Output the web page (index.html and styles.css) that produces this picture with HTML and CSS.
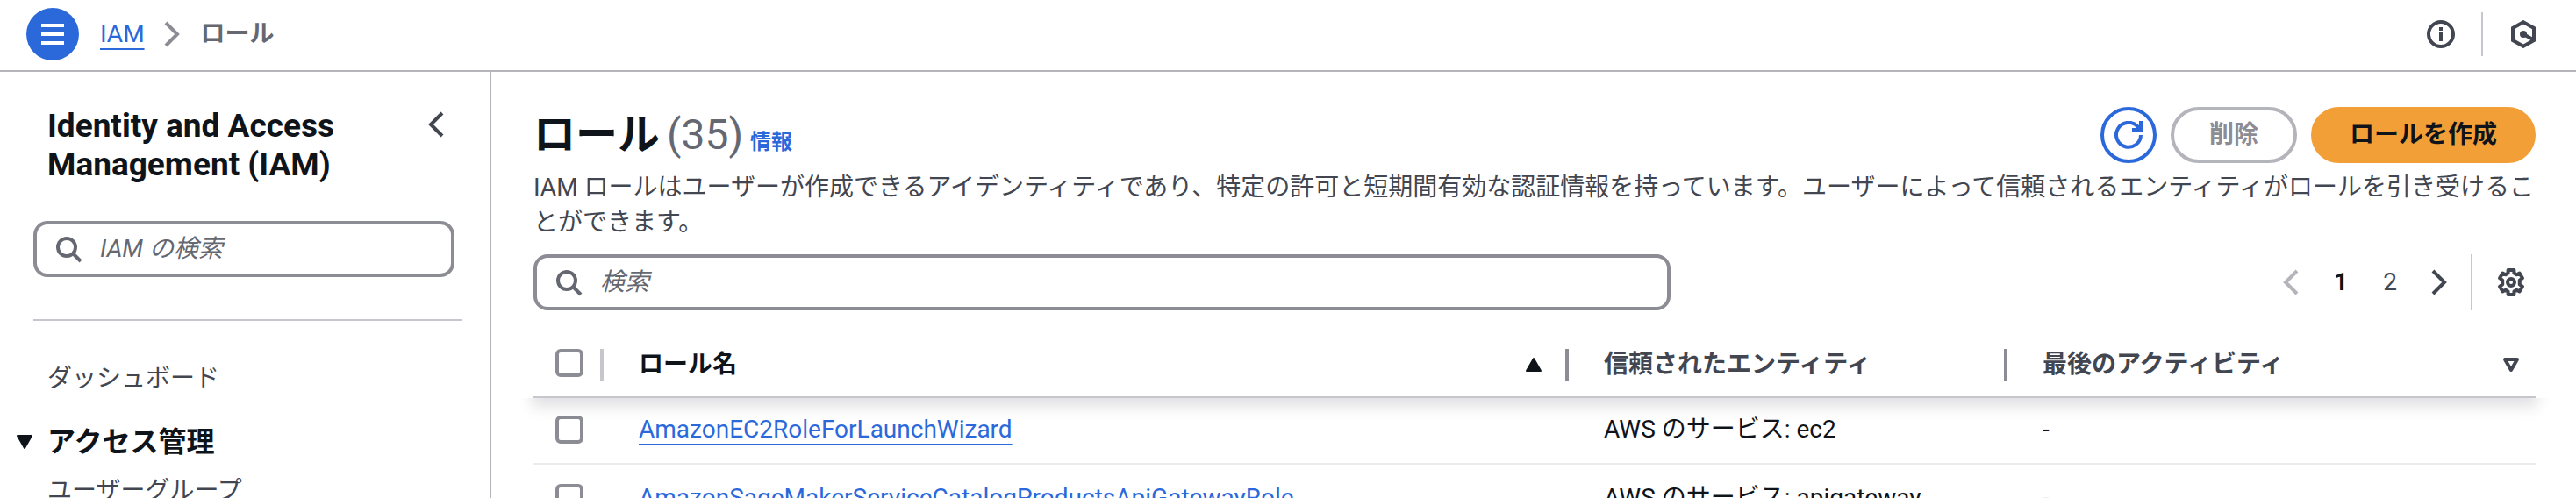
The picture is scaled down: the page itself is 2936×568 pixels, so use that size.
FILE: index.html
```html
<!DOCTYPE html>
<html lang="ja">
<head>
<meta charset="utf-8">
<meta name="viewport" content="width=device-width, initial-scale=1">
<title>ロール | IAM</title>
<link rel="stylesheet" href="styles.css">
</head>
<body>
<div class="app">
  <header class="topbar">
    <button class="menu-button" type="button" aria-label="メニュー">
      <svg class="icon" viewBox="0 0 16 16"><path d="M1.500 3h13M1.500 8h13M1.500 13h13"/></svg>
    </button>
    <nav class="breadcrumbs" aria-label="パンくずリスト">
      <a class="link" href="#iam">IAM</a>
      <svg class="icon crumb-arrow" viewBox="0 0 16 16"><path d="M4 1.500 10.500 8 4 14.500"/></svg>
      <span class="crumb-current">ロール</span>
    </nav>
    <div class="topbar-tools">
      <button class="icon-button" type="button" aria-label="ヘルプ">
        <svg class="icon" viewBox="0 0 16 16"><circle cx="8" cy="8" r="7"/><path d="M8 4v2M8 7v5"/></svg>
      </button>
      <span class="tool-divider"></span>
      <button class="icon-button" type="button" aria-label="Amazon Q">
        <svg class="icon" viewBox="0 0 16 16"><path d="M8 1.100 14 4.500v7L8 14.900 2 11.500v-7z"/><path d="M8 8l5.500 3"/><circle class="fill" cx="8" cy="8" r="2"/></svg>
      </button>
    </div>
  </header>

  <div class="layout">
    <aside class="sidebar">
      <div class="sidebar-head">
        <h2 class="sidebar-title">Identity and Access Management (IAM)</h2>
        <button class="icon-button" type="button" aria-label="ナビゲーションを閉じる">
          <svg class="icon" viewBox="0 0 16 16"><path d="M11 1.500 4.500 8l6.500 6.500"/></svg>
        </button>
      </div>
      <label class="search sidebar-search">
        <svg class="icon" viewBox="0 0 16 16"><circle cx="7" cy="7" r="5"/><path d="m10.500 10.500 4.500 4.500"/></svg>
        <input class="search-input" type="search" placeholder="IAM の検索" aria-label="IAM の検索">
      </label>
      <hr class="sidebar-rule">
      <nav class="side-nav" aria-label="IAM">
        <a class="side-link" href="#dashboard">ダッシュボード</a>
        <button class="side-section" type="button" aria-expanded="true">
          <svg class="caret" viewBox="0 0 20 18"><path d="M2 2h16l-8 14z"/></svg>
          <span>アクセス管理</span>
        </button>
        <a class="side-link" href="#groups">ユーザーグループ</a>
      </nav>
    </aside>

    <main class="content">
      <div class="page-head">
        <div class="page-title">
          <h1 class="title">ロール <span class="count">(35)</span></h1>
          <a class="info-link" href="#info">情報</a>
        </div>
        <div class="actions">
          <button class="button refresh" type="button" aria-label="更新">
            <svg class="icon" viewBox="0 0 16 16"><path d="M15 8a7 7 0 1 1-2-5l2 2"/><path d="M15 0v5h-5"/></svg>
          </button>
          <button class="button" type="button" disabled>削除</button>
          <button class="button primary" type="button">ロールを作成</button>
        </div>
      </div>
      <p class="description">IAM ロールはユーザーが作成できるアイデンティティであり、特定の許可と短期間有効な認証情報を持っています。ユーザーによって信頼されるエンティティがロールを引き受けることができます。</p>

      <div class="table-tools">
        <label class="search table-search">
          <svg class="icon" viewBox="0 0 16 16"><circle cx="7" cy="7" r="5"/><path d="m10.500 10.500 4.500 4.500"/></svg>
          <input class="search-input" type="search" placeholder="検索" aria-label="検索">
        </label>
        <div class="pager">
          <button class="icon-button" type="button" aria-label="前のページ" disabled>
            <svg class="icon" viewBox="0 0 16 16"><path d="M11 1.500 4.500 8l6.500 6.500"/></svg>
          </button>
          <button class="page-button current" type="button" aria-current="page">1</button>
          <button class="page-button" type="button">2</button>
          <button class="icon-button" type="button" aria-label="次のページ">
            <svg class="icon" viewBox="0 0 16 16"><path d="M4.500 1.500 11 8l-6.500 6.500"/></svg>
          </button>
        </div>
        <div class="settings">
          <button class="icon-button" type="button" aria-label="設定">
            <svg class="icon gear" viewBox="0 0 16 16"><path d="M6.300 1h3.400v1.800l1.400.8 1.700-.8 1.700 2.800-1.600 1.200v2.400l1.600 1.200-1.700 2.800-1.700-.8-1.400.8V15H6.300v-1.800l-1.400-.8-1.700.8-1.700-2.800 1.600-1.200V6.800L1.500 5.600l1.700-2.800 1.700.8 1.400-.8z"/><circle cx="8" cy="8" r="2"/></svg>
          </button>
        </div>
      </div>

      <table class="roles">
        <colgroup><col class="col-check"><col><col class="col-entity"><col class="col-activity"></colgroup>
        <thead>
          <tr>
            <th class="check-cell"><div class="head-cell"><input class="checkbox" type="checkbox" aria-label="すべて選択"></div></th>
            <th class="sorted" aria-sort="ascending"><div class="head-cell">ロール名<svg class="caret" viewBox="0 0 20 18"><path d="M10 2l8 14H2z"/></svg></div></th>
            <th><div class="head-cell">信頼されたエンティティ</div></th>
            <th><div class="head-cell">最後のアクティビティ<svg class="caret hollow" viewBox="0 0 20 18"><path d="M3 3h14l-7 12z"/></svg></div></th>
          </tr>
        </thead>
        <tbody>
          <tr>
            <td class="check-cell"><input class="checkbox" type="checkbox" aria-label="AmazonEC2RoleForLaunchWizard"></td>
            <td><a class="link" href="#role-1">AmazonEC2RoleForLaunchWizard</a></td>
            <td>AWS のサービス: ec2</td>
            <td>-</td>
          </tr>
          <tr>
            <td class="check-cell"><input class="checkbox" type="checkbox" aria-label="AmazonSageMakerServiceCatalogProductsApiGatewayRole"></td>
            <td><a class="link" href="#role-2">AmazonSageMakerServiceCatalogProductsApiGatewayRole</a></td>
            <td>AWS のサービス: apigateway</td>
            <td>-</td>
          </tr>
        </tbody>
      </table>
    </main>
  </div>
</div>
</body>
</html>
```
FILE: styles.css
```css
:root {
  --text: #0f141a;
  --text-body: #424650;
  --text-muted: #656871;
  --blue: #2b69db;
  --orange: #f29f38;
  --line: #c6c6cd;
  --line-strong: #b4b4bb;
  --line-control: #8c8c94;
  --line-soft: #ebebf0;
}

* {
  box-sizing: border-box;
}

html,
body {
  height: 100%;
  overflow: hidden;
}

body {
  margin: 0;
  background: #fff;
  color: var(--text);
  font: 28px/40px Roboto, "Noto Sans CJK JP", sans-serif;
}

button,
input {
  margin: 0;
  font: inherit;
  color: inherit;
}

button {
  padding: 0;
  border: 0;
  background: none;
  cursor: pointer;
}

.app {
  display: flex;
  flex-direction: column;
  height: 100%;
  overflow: hidden;
}

.icon {
  display: block;
  flex: none;
  width: 32px;
  height: 32px;
  fill: none;
  stroke: currentColor;
  stroke-width: 2;
}

.icon .fill {
  fill: currentColor;
  stroke: none;
}

.gear {
  stroke-linejoin: round;
}

.icon-button {
  display: block;
  flex: none;
  color: var(--text-body);
}

.icon-button:disabled {
  color: var(--line-strong);
}

.link {
  color: var(--blue);
  text-decoration: underline;
  text-decoration-thickness: 2px;
  text-decoration-skip-ink: none;
  text-underline-offset: 7px;
}

/* Top bar */
.topbar {
  display: flex;
  flex: none;
  align-items: center;
  padding: 9px 44px 11px 30px;
  border-bottom: 2px solid var(--line-strong);
}

.menu-button {
  display: grid;
  place-items: center;
  width: 60px;
  height: 60px;
  border-radius: 50%;
  background: var(--blue);
  color: #fff;
}

.breadcrumbs {
  display: flex;
  align-items: center;
  gap: 16px;
  margin-left: 24px;
}

.crumb-arrow {
  color: var(--line-control);
}

.crumb-current {
  color: var(--text-muted);
  font-weight: 700;
}

.topbar-tools {
  display: flex;
  align-items: center;
  gap: 30px;
  margin-left: auto;
}

.tool-divider {
  width: 2px;
  height: 50px;
  background: var(--line);
}

/* Sidebar */
.layout {
  display: flex;
  flex: 1;
  min-height: 0;
}

.sidebar {
  flex: none;
  width: 560px;
  padding: 40px 32px 0 38px;
  border-right: 2px solid var(--line-strong);
  overflow: hidden;
}

.sidebar-head {
  display: flex;
  align-items: flex-start;
  justify-content: space-between;
  padding: 0 12px 0 16px;
}

.sidebar-head .icon-button {
  padding-top: 4px;
}

.sidebar-title {
  width: 360px;
  margin: 0;
  font-size: 37px;
  line-height: 44px;
}

.search {
  display: flex;
  align-items: center;
  gap: 20px;
  height: 64px;
  padding: 0 20px;
  border: 4px solid var(--line-control);
  border-radius: 16px;
  color: var(--text-muted);
}

.search-input {
  flex: 1;
  min-width: 0;
  padding: 0;
  border: 0;
  outline: 0;
  background: none;
}

.search-input::placeholder {
  color: var(--text-muted);
  font-style: italic;
  opacity: 1;
}

.sidebar-search {
  margin: 42px 8px 0 0;
}

.sidebar-rule {
  height: 2px;
  margin: 48px 0 46px;
  border: 0;
  background: var(--line);
}

.side-nav {
  display: flex;
  flex-direction: column;
  align-items: flex-start;
}

.side-link {
  padding-left: 16px;
  color: var(--text-body);
  text-decoration: none;
}

.side-section {
  display: flex;
  align-items: center;
  gap: 16px;
  margin: 32px 0 16px -20px;
  font-size: 32px;
  font-weight: 700;
}

.caret {
  flex: none;
  width: 20px;
  height: 18px;
  fill: currentColor;
  stroke: currentColor;
  stroke-width: 2;
  stroke-linejoin: round;
}

.caret.hollow {
  fill: none;
  stroke-width: 4;
}

/* Main content */
.content {
  flex: 1;
  min-width: 0;
  padding: 40px 46px 0 48px;
  overflow: hidden;
}

.page-head {
  display: flex;
  align-items: center;
  justify-content: space-between;
}

.page-title {
  display: flex;
  align-items: baseline;
  gap: 8px;
}

.title {
  display: flex;
  gap: 8px;
  margin: 0;
  font-size: 48px;
  line-height: 64px;
}

.count {
  color: var(--text-muted);
  font-weight: 400;
}

.info-link {
  color: var(--blue);
  font-size: 24px;
  font-weight: 700;
  text-decoration: none;
}

.actions {
  display: flex;
  gap: 16px;
}

.button {
  height: 64px;
  padding: 0 40px;
  border: 4px solid currentColor;
  border-radius: 32px;
  font-weight: 700;
}

.button:disabled {
  border-color: var(--line-strong);
  color: var(--line-control);
}

.button.primary {
  border-color: var(--orange);
  background: var(--orange);
}

.button.refresh {
  padding: 0 12px;
  color: var(--blue);
}

.description {
  margin: 8px -20px 16px 0;
  color: var(--text-body);
}

.table-tools {
  display: flex;
  align-items: center;
}

.table-search {
  width: 1296px;
}

.pager {
  display: flex;
  align-items: center;
  gap: 24px;
  margin-left: auto;
}

.page-button {
  width: 32px;
  color: var(--text-body);
}

.page-button.current {
  color: var(--text);
  font-weight: 700;
}

.settings {
  display: flex;
  align-items: center;
  height: 64px;
  margin-left: 20px;
  padding: 0 12px 0 28px;
  border-left: 2px solid var(--line);
}

/* Roles table */
.roles {
  width: 100%;
  margin-top: 22px;
  border-spacing: 0;
  table-layout: fixed;
}

.col-check {
  width: 80px;
}

.col-entity {
  width: 500px;
}

.col-activity {
  width: 602px;
}

/* The shadow shows only below the header row */
.roles thead {
  position: relative;
  background: #fff;
  box-shadow: 0 8px 16px 2px rgba(0, 7, 22, 0.12);
  clip-path: polygon(0 0, 100% 0, 100% 100%, calc(100% + 24px) 100%, calc(100% + 24px) calc(100% + 40px), -24px calc(100% + 40px), -24px 100%, 0 100%);
}

.roles th {
  padding: 22px 0 18px;
  border-bottom: 2px solid var(--line);
  color: var(--text-body);
  font-weight: 700;
  text-align: left;
}

.roles th.sorted {
  color: var(--text);
}

.head-cell {
  display: flex;
  align-items: center;
  justify-content: space-between;
  height: 36px;
  padding: 0 26px 0 40px;
  border-right: 4px solid var(--line-control);
}

th:last-child .head-cell {
  padding-right: 18px;
  border-right: 0;
}

.check-cell .head-cell {
  align-items: flex-start;
  padding: 0;
  border-color: var(--line);
}

.roles td {
  padding: 18px 40px;
  border-bottom: 2px solid var(--line-soft);
}

.roles tbody tr:first-child td {
  padding-top: 16px;
}

.roles th.check-cell,
.roles td.check-cell {
  padding-left: 25px;
  padding-right: 0;
}

.checkbox {
  display: block;
  appearance: none;
  width: 32px;
  height: 32px;
  border: 4px solid var(--line-control);
  border-radius: 6px;
  background: #fff;
}
```
